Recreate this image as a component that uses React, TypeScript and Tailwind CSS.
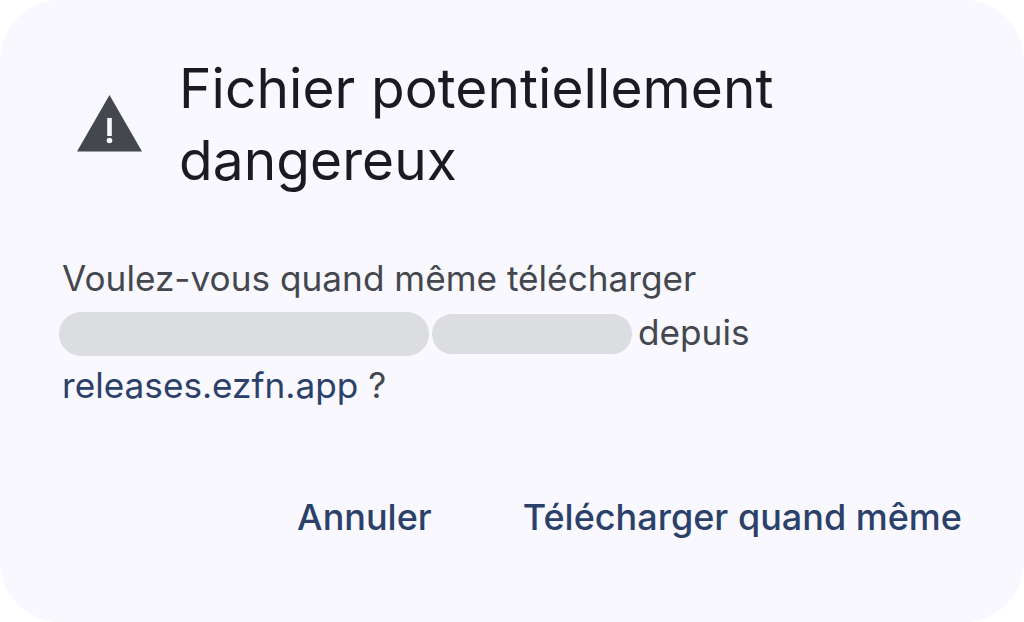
export default function App() {
  return (
    <div className="w-[1024px] h-[622px] bg-white overflow-hidden font-['Inter',sans-serif]">
      <div className="w-full h-full bg-[#f8f8fe] rounded-[60px] flex flex-col pl-[62px] pr-[62px] pt-[52px]">
        <div className="flex items-start">
          <svg className="w-[65px] h-[57px] ml-[15px] mr-[37px] mt-[43px] shrink-0" viewBox="0 0 65 57">
            <path d="M32.5 0 L65 56.5 H0 Z" fill="#44474e" />
            <rect x="30.2" y="23" width="4.6" height="18" fill="#f8f8fe" />
            <circle cx="32.5" cy="45.5" r="2.8" fill="#f8f8fe" />
          </svg>
          <h1 className="text-[55px] leading-[72px] tracking-[0.08px] text-[#1a1b20] font-normal w-[640px]">Fichier potentiellement dangereux</h1>
        </div>
        <div className="mt-[56px] text-[35.2px] leading-[53.5px] text-[#44474e]">
          <div>Voulez-vous quand même télécharger</div>
          <div className="flex items-center">
            <span className="w-[370px] h-[44px] rounded-[22px] bg-[#dcdde1] -ml-[3px] mt-[3px]" />
            <span className="w-[200px] h-[40px] rounded-[20px] bg-[#dcdde1] ml-[3px] mt-[3px]" />
            <span className="ml-[6px]">depuis</span>
          </div>
          <div><span className="text-[#2b4169]">releases.ezfn.app</span> ?</div>
        </div>
        <div className="mt-[77.5px] flex justify-end gap-[91px] text-[36px] leading-[54px] font-medium text-[#2b4169]">
          <span>Annuler</span>
          <span>Télécharger quand même</span>
        </div>
      </div>
    </div>
  );
}
